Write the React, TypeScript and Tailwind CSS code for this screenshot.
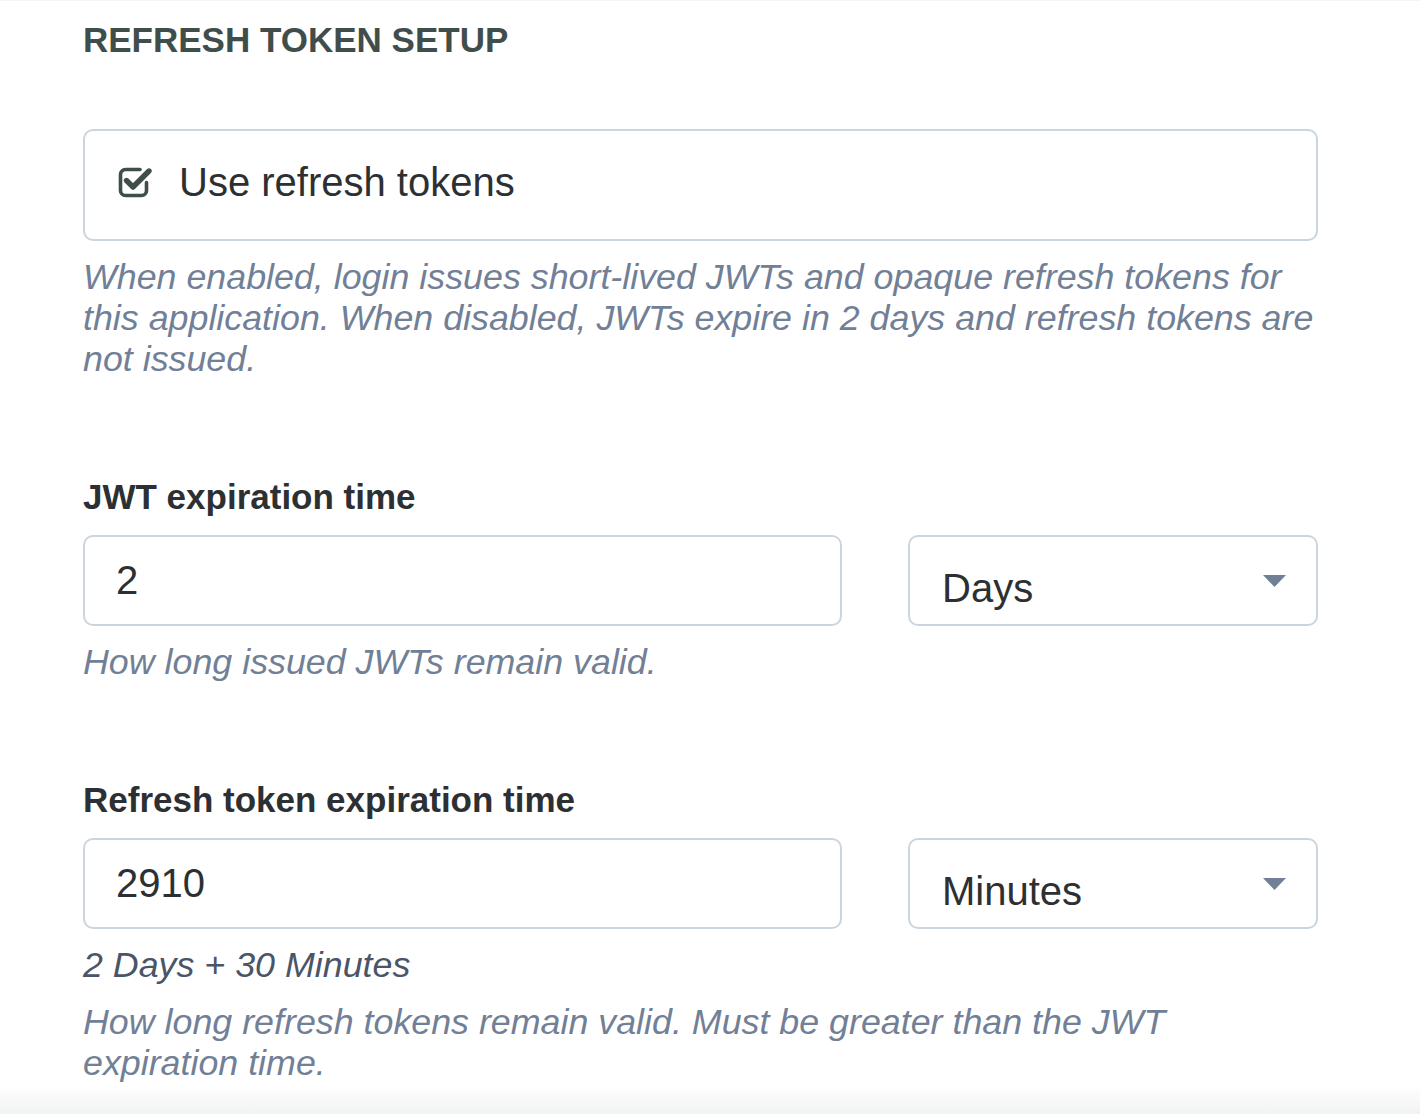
import React from "react";

function CheckSquare() {
  return (
    <svg width="36" height="33" viewBox="0 0 36 33" fill="none" className="shrink-0">
      <path
        d="M23 3.5H8.5a5 5 0 0 0-5 5v16a5 5 0 0 0 5 5h16a5 5 0 0 0 5-5v-8"
        stroke="#3f4e4b"
        strokeWidth="3.6"
        strokeLinecap="round"
      />
      <path
        d="M9.5 14.5l6.5 6.5L32 5"
        stroke="#3f4e4b"
        strokeWidth="5.4"
        strokeLinecap="round"
        strokeLinejoin="round"
      />
    </svg>
  );
}

function Caret() {
  return (
    <svg width="23" height="12" viewBox="0 0 23 12" className="pointer-events-none absolute right-[32px] top-1/2 -translate-y-1/2">
      <path d="M0 0h23L11.5 12z" fill="#718096" />
    </svg>
  );
}

interface DurationFieldProps {
  label: string;
  value: string;
  unit: string;
}

function DurationField({ label, value, unit }: DurationFieldProps) {
  return (
    <>
      <label className="block text-[35px] leading-[42px] font-bold text-[#2d3033]">{label}</label>
      <div className="mt-[17px] flex gap-[66px]">
        <input
          type="text"
          defaultValue={value}
          className="h-[91px] min-w-0 flex-1 rounded-[10px] border-2 border-[#ccd5de] bg-white px-[31px] text-[40px] text-[#2d3033] outline-none"
        />
        <div className="relative w-[410px]">
          <select
            defaultValue={unit}
            className="h-[91px] w-full appearance-none rounded-[10px] border-2 border-[#ccd5de] bg-white pl-[32px] pt-[14px] text-[40px] text-[#2d3033] outline-none"
          >
            <option>Minutes</option>
            <option>Hours</option>
            <option>Days</option>
          </select>
          <Caret />
        </div>
      </div>
    </>
  );
}

export default function App() {
  return (
    <div className="flex h-[1114px] w-full flex-col overflow-hidden border-t border-[#f4f5f5] bg-white font-[Liberation_Sans,Arial,sans-serif]">
      <div className="pl-[83px] pr-[102px]">
        <h2 className="mt-[18px] text-[35px] leading-[42px] font-bold uppercase text-[#3f4e4b]">Refresh token setup</h2>

        <label className="mt-[68px] flex h-[112px] items-center gap-[26px] rounded-[10px] border-2 border-[#ccd5de] pb-[6px] pl-[32px]">
          <CheckSquare />
          <span className="text-[40px] leading-[48px] text-[#2d3033]">Use refresh tokens</span>
        </label>
        <p className="mt-[16px] text-[35.8px] leading-[41px] italic text-[#718096]">
          When enabled, login issues short-lived JWTs and opaque refresh tokens for this application. When disabled, JWTs expire in 2 days and refresh tokens are not issued.
        </p>

        <div className="mt-[96px]">
          <DurationField label="JWT expiration time" value="2" unit="Days" />
          <p className="mt-[16px] text-[35.8px] leading-[41px] italic text-[#718096]">How long issued JWTs remain valid.</p>
        </div>

        <div className="mt-[96px]">
          <DurationField label="Refresh token expiration time" value="2910" unit="Minutes" />
          <p className="mt-[16px] text-[35.8px] leading-[41px] italic text-[#4a5568]">2 Days + 30 Minutes</p>
          <p className="mt-[16px] pr-[120px] text-[35.8px] leading-[41px] italic text-[#718096]">
            How long refresh tokens remain valid. Must be greater than the JWT expiration time.
          </p>
        </div>
      </div>
      <div className="mt-auto h-[29px] shrink-0 bg-gradient-to-b from-white to-[#f1f2f2]" />
    </div>
  );
}
